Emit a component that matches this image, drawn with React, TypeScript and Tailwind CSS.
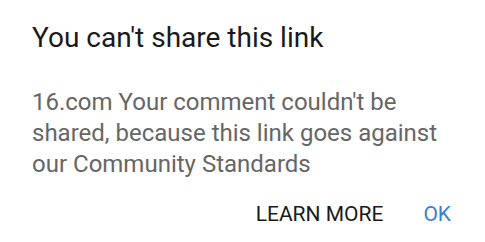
export default function App() {
  return (
    <div
      className="w-[485px] h-[242px] bg-white flex flex-col pl-8 pr-[40px]"
      style={{ fontFamily: 'Roboto, "Liberation Sans", sans-serif' }}
    >
      <h1 className="pt-[22px] text-[28px] leading-[32px] text-[#1a1a1a]">
        You can't share this link
      </h1>
      <p className="mt-[33px] text-[24px] leading-[31px] text-[#666666]">
        16.com Your comment couldn't be shared, because this link goes against our Community Standards
      </p>
      <div className="mt-[22px] flex justify-end items-center gap-[40px] -mr-[6px] text-[21px] leading-[24px]">
        <button className="text-[#1a1a1a]">LEARN MORE</button>
        <button className="text-[#3b7fd4]">OK</button>
      </div>
    </div>
  )
}
